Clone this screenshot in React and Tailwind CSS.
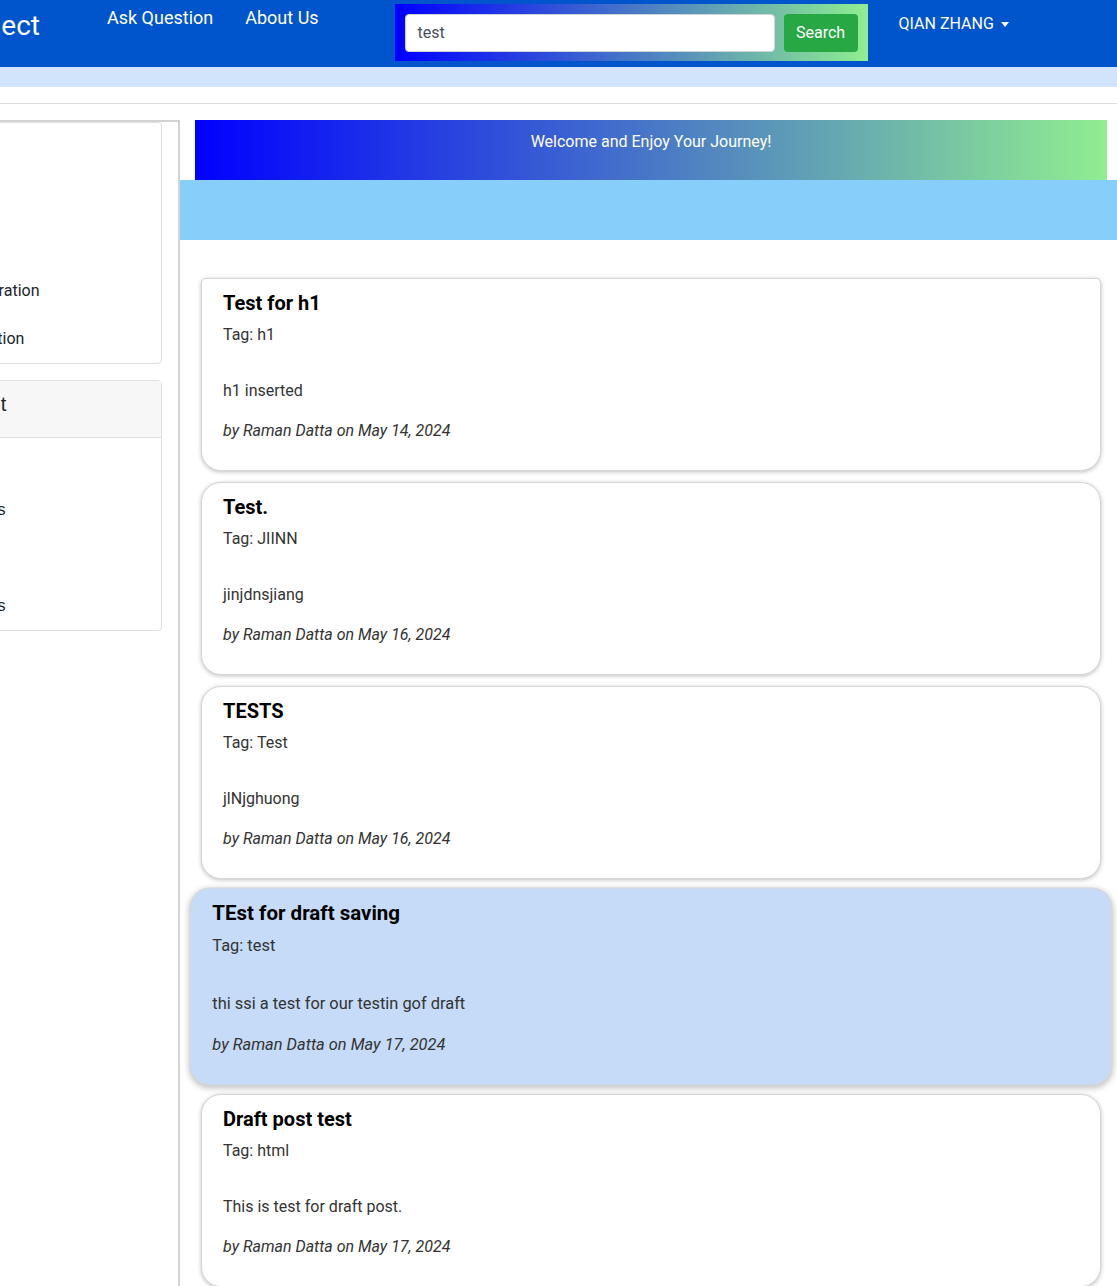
import React from "react";

const posts = [
  { title: "Test for h1", tag: "h1", body: "h1 inserted", date: "May 14, 2024", first: true },
  { title: "Test.", tag: "JIINN", body: "jinjdnsjiang", date: "May 16, 2024" },
  { title: "TESTS", tag: "Test", body: "jlNjghuong", date: "May 16, 2024" },
  { title: "TEst for draft saving", tag: "test", body: "thi ssi a test for our testin gof draft", date: "May 17, 2024", hover: true },
  { title: "Draft post test", tag: "html", body: "This is test for draft post.", date: "May 17, 2024" },
];

function Card({ p }) {
  const base =
    "shrink-0 h-[193px] pt-[12px] px-[21px] border border-[#d6d6d6] shadow-[0_1px_4px_rgba(0,0,0,0.25)]";
  const shape = p.first ? "rounded-t-[5px] rounded-b-[20px]" : "rounded-[20px]";
  const color = p.hover ? "bg-[#c5dbf7] scale-[1.025] shadow-[0_2px_6px_rgba(0,0,0,0.25)]" : "bg-white";
  return (
    <div className={`${base} ${shape} ${color}`}>
      <h5 className="text-[20px] leading-[24px] font-bold text-black mb-[8px]">{p.title}</h5>
      <p className="text-[16px] leading-[24px] text-[#333] mb-[32px]">Tag: {p.tag}</p>
      <p className="text-[16px] leading-[24px] text-[#333] mb-[16px]">{p.body}</p>
      <p className="text-[16px] leading-[24px] text-[#333] italic">by Raman Datta on {p.date}</p>
    </div>
  );
}

const group1 = [
  { t: "Home", pl: "pl-[20px]" },
  { t: "Profile", pl: "pl-[20px]" },
  { t: "Posts", pl: "pl-[20px]" },
  { t: "Administration", pl: "pl-[31px]" },
  { t: "Ask Question", pl: "pl-[26px]" },
];
const group2 = [
  { t: "Profile", pl: "pl-[20px]" },
  { t: "My Drafts", pl: "pl-[33px]" },
  { t: "Logout", pl: "pl-[20px]" },
  { t: "Followers", pl: "pl-[33px]" },
];

export default function App() {
  return (
    <div className="w-[1117px] h-[1286px] overflow-hidden bg-white font-['Roboto',sans-serif]">
      {/* Header */}
      <header className="h-[67px] bg-[#0055cc] flex items-start text-white">
        <div className="w-[40px] shrink-0 overflow-hidden flex justify-end pt-[8px]">
          <span className="whitespace-nowrap text-[28px] leading-[36px]">Connect</span>
        </div>
        <nav className="flex ml-[67px] gap-[32px] pt-[6px] text-[18px] leading-[24px]">
          <span>Ask Question</span>
          <span>About Us</span>
        </nav>
        <div className="ml-[76px] mt-[4px] w-[473px] h-[57px] flex items-center gap-[9px] px-[10px] bg-[linear-gradient(to_right,#0000ff,#90ee90)]">
          <div className="w-[370px] h-[38px] bg-white border border-[#ced4da] rounded-[4px] flex items-center px-[12px] text-[16px] text-[#495057]">
            test
          </div>
          <div className="w-[74px] h-[38px] bg-[#28a745] rounded-[4px] flex items-center justify-center text-[16px] text-white">
            Search
          </div>
        </div>
        <div className="ml-[31px] pt-[12px] flex items-center gap-[7px] text-[16px] leading-[24px]">
          <span>QIAN ZHANG</span>
          <span className="w-0 h-0 border-l-[4px] border-r-[4px] border-t-[5px] border-l-transparent border-r-transparent border-t-white" />
        </div>
      </header>
      <div className="h-[20px] bg-[#d2e3fc]" />
      <div className="h-[16px]" />
      <div className="h-px bg-[#dcdcdc]" />
      <div className="h-[16px]" />

      {/* Body */}
      <div className="flex">
        {/* Sidebar */}
        <div className="w-[180px] h-[1200px] shrink-0 overflow-hidden flex justify-end border-t-2 border-r-2 border-[#d3d3d3]">
          <div className="w-[275px] shrink-0 pr-[16px] text-[16px] text-[#212529]">
            <div className="border border-[#e0e0e0] rounded-[4px] bg-white">
              {group1.map((g) => (
                <div key={g.t} className={`h-[48px] ${g.pl} pr-[20px] py-[12px] leading-[24px] whitespace-nowrap`}>
                  {g.t}
                </div>
              ))}
            </div>
            <div className="mt-[16px] border border-[#e0e0e0] rounded-[4px] bg-white">
              <div className="h-[57px] pl-[30px] pr-[20px] pt-[8px] bg-[#f7f7f7] border-b border-[#e0e0e0] text-[20px] leading-[30px] font-['Liberation_Sans',sans-serif] whitespace-nowrap">
                Account
              </div>
              {group2.map((g) => (
                <div key={g.t} className={`h-[48px] ${g.pl} pr-[20px] py-[12px] leading-[24px] whitespace-nowrap font-['Liberation_Sans',sans-serif]`}>
                  {g.t}
                </div>
              ))}
            </div>
          </div>
        </div>

        {/* Main */}
        <main className="flex-1 min-w-0">
          <div className="ml-[15px] mr-[10px] h-[60px] pt-[10px] text-center text-white text-[16px] leading-[24px] bg-[linear-gradient(to_right,#0000ff,#90ee90)]">
            Welcome and Enjoy Your Journey!
          </div>
          <div className="h-[60px] bg-[#87cefa]" />
          <div className="mt-[38px] ml-[21px] mr-[16px] flex flex-col gap-[11px]">
            {posts.map((p) => (
              <Card key={p.title} p={p} />
            ))}
          </div>
        </main>
      </div>
    </div>
  );
}
